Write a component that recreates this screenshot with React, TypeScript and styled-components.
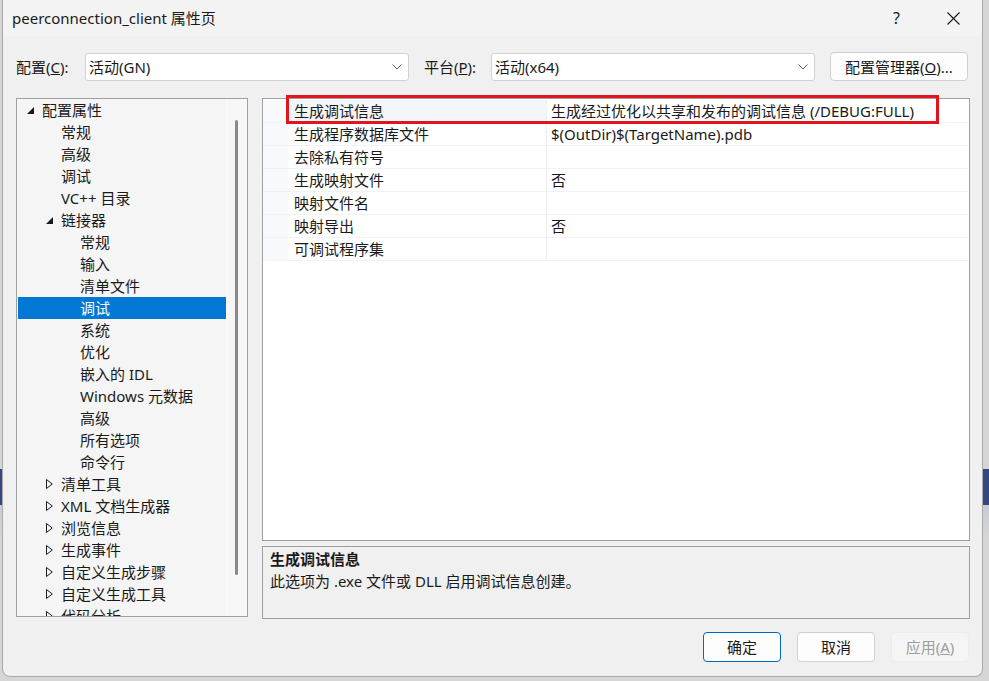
import React from "react";
import styled, { createGlobalStyle } from "styled-components";

const FONT = `"Noto Sans", "Noto Sans CJK SC", sans-serif`;

const GlobalStyle = createGlobalStyle`
  html, body { margin: 0; padding: 0; }
  body {
    width: 989px;
    height: 681px;
    overflow: hidden;
    font-family: ${FONT};
    background: linear-gradient(to bottom, #d6d6d6 0, #d6d6d6 469px, #34477f 469px, #34477f 505px, #c9ccd4 505px, #d6d6d6 540px);
  }
`;

const Window = styled.div`
  margin-left: 2px;
  width: 979px;
  height: 676px;
  background: #f0f0f0;
  border: 1px solid #a9a9a9;
  border-top: none;
  border-radius: 0 0 8px 8px;
  display: flex;
  flex-direction: column;
  color: #1a1a1a;
  font-size: 15px;
  overflow: hidden;
`;

const TitleBar = styled.div`
  height: 36px;
  background: #f3f3f3;
  display: flex;
  align-items: center;
  padding-left: 9px;
`;

const Title = styled.div`
  flex: 1;
  font-size: 15px;
  line-height: 20px;
  color: #1a1a1a;
`;

const CaptionButton = styled.div`
  width: 57px;
  height: 36px;
  display: flex;
  align-items: center;
  justify-content: center;
  font-size: 16px;
  color: #1a1a1a;
`;

const ConfigRow = styled.div`
  margin-top: 16px;
  height: 29px;
  display: flex;
  align-items: center;
  padding-left: 13px;
`;

const FieldLabel = styled.label<{ $w: number; $ml?: number }>`
  width: ${(p) => p.$w}px;
  margin-left: ${(p) => p.$ml ?? 0}px;
  line-height: 20px;
  white-space: nowrap;
`;

const Combo = styled.div`
  width: 324px;
  height: 28px;
  box-sizing: border-box;
  background: #ffffff;
  border: 1px solid #d2d2d2;
  border-radius: 3px;
  display: flex;
  align-items: center;
  padding: 0 6px 0 3px;
  line-height: 20px;
`;

const ComboText = styled.span`
  flex: 1;
`;

const PushButton = styled.div<{ $primary?: boolean; $disabled?: boolean }>`
  height: 30px;
  box-sizing: border-box;
  display: flex;
  align-items: center;
  justify-content: center;
  border-radius: 4px;
  border: 1px solid ${(p) => (p.$primary ? "#0067c0" : p.$disabled ? "#ececec" : "#d0d0d0")};
  background: ${(p) => (p.$disabled ? "#f5f5f5" : "#fdfdfd")};
  color: ${(p) => (p.$disabled ? "#9d9d9d" : "#1a1a1a")};
  line-height: 20px;
`;

const ManagerButton = styled(PushButton)`
  margin-left: 15px;
  width: 138px;
  height: 29px;
`;

const Main = styled.div`
  margin-top: 17px;
  display: flex;
  gap: 14px;
  padding-left: 13px;
`;

const TreePanel = styled.div`
  width: 232px;
  height: 519px;
  box-sizing: border-box;
  border: 1px solid #a0a0a0;
  background: #f5f5f5;
  display: flex;
  overflow: hidden;
`;

const TreeList = styled.div`
  width: 208px;
  padding-left: 1px;
  overflow: hidden;
`;

const TreeRow = styled.div<{ $level: number; $selected?: boolean }>`
  height: 22px;
  display: flex;
  align-items: center;
  padding-left: ${(p) => 8 + p.$level * 19}px;
  background: ${(p) => (p.$selected ? "#0078d4" : "transparent")};
  color: ${(p) => (p.$selected ? "#ffffff" : "#1a1a1a")};
  line-height: 20px;
  white-space: nowrap;
`;

const Expander = styled.span`
  width: 16px;
  height: 22px;
  display: flex;
  align-items: center;
  padding-left: 1px;
  box-sizing: border-box;
  flex: none;
`;

const ScrollTrack = styled.div`
  flex: 1;
  background: #f7f7f7;
  border-left: 1px solid #fbfbfb;
  padding-top: 21px;
  display: flex;
  justify-content: center;
`;

const ScrollThumb = styled.div`
  width: 3px;
  height: 455px;
  border-radius: 2px;
  background: #8a8a8a;
  margin-left: -2px;
`;

const RightColumn = styled.div`
  width: 708px;
  display: flex;
  flex-direction: column;
  gap: 5px;
`;

const Grid = styled.div`
  position: relative;
  height: 443px;
  box-sizing: border-box;
  border: 1px solid #a0a0a0;
  background: #ffffff;
  padding: 1px 1px 0 0;
`;

const GridRow = styled.div`
  height: 23px;
  box-sizing: border-box;
  display: flex;
  border-bottom: 1px solid #f0f2f5;
`;

const Gutter = styled.div`
  width: 25px;
  background: #f7f9fc;
  flex: none;
`;

const NameCell = styled.div<{ $active?: boolean }>`
  width: 259px;
  box-sizing: border-box;
  padding-left: 6px;
  background: ${(p) => (p.$active ? "#f2f5fa" : "#ffffff")};
  border-right: 1px solid #eef0f4;
  line-height: 23px;
  white-space: nowrap;
  flex: none;
`;

const ValueCell = styled.div`
  flex: 1;
  padding-left: 4px;
  line-height: 23px;
  white-space: nowrap;
`;

const Highlight = styled.div`
  position: absolute;
  left: 23px;
  top: -4px;
  width: 653px;
  height: 29px;
  box-sizing: border-box;
  border: 3px solid #e3141e;
  pointer-events: none;
`;

const Description = styled.div`
  height: 73px;
  box-sizing: border-box;
  border: 1px solid #a0a0a0;
  background: #f0f0f0;
  padding: 1px 7px;
  line-height: 22px;
`;

const DescTitle = styled.div`
  font-weight: 700;
`;

const Footer = styled.div`
  margin-top: 13px;
  display: flex;
  justify-content: flex-end;
  gap: 16px;
  padding-right: 13px;
`;

const DialogButton = styled(PushButton)`
  width: 78px;
`;

const Chevron = () => (
  <svg width="10" height="6" viewBox="0 0 10 6">
    <polyline points="0.5,0.5 5,5 9.5,0.5" fill="none" stroke="#606060" strokeWidth="1" />
  </svg>
);

const OpenArrow = () => (
  <svg width="7" height="7" viewBox="0 0 7 7">
    <polygon points="7,0 7,7 0,7" fill="#1a1a1a" />
  </svg>
);

const ClosedArrow = () => (
  <svg width="7" height="10" viewBox="0 0 7 10">
    <polygon points="0.5,0.5 6.3,5 0.5,9.5" fill="none" stroke="#1a1a1a" strokeWidth="1" />
  </svg>
);

const CloseIcon = () => (
  <svg width="13" height="13" viewBox="0 0 13 13">
    <path d="M0.5 0.5 L12.5 12.5 M12.5 0.5 L0.5 12.5" stroke="#1a1a1a" strokeWidth="1.1" />
  </svg>
);

type TreeItem = { label: string; level: number; arrow?: "open" | "closed"; selected?: boolean };

const tree: TreeItem[] = [
  { label: "配置属性", level: 0, arrow: "open" },
  { label: "常规", level: 1 },
  { label: "高级", level: 1 },
  { label: "调试", level: 1 },
  { label: "VC++ 目录", level: 1 },
  { label: "链接器", level: 1, arrow: "open" },
  { label: "常规", level: 2 },
  { label: "输入", level: 2 },
  { label: "清单文件", level: 2 },
  { label: "调试", level: 2, selected: true },
  { label: "系统", level: 2 },
  { label: "优化", level: 2 },
  { label: "嵌入的 IDL", level: 2 },
  { label: "Windows 元数据", level: 2 },
  { label: "高级", level: 2 },
  { label: "所有选项", level: 2 },
  { label: "命令行", level: 2 },
  { label: "清单工具", level: 1, arrow: "closed" },
  { label: "XML 文档生成器", level: 1, arrow: "closed" },
  { label: "浏览信息", level: 1, arrow: "closed" },
  { label: "生成事件", level: 1, arrow: "closed" },
  { label: "自定义生成步骤", level: 1, arrow: "closed" },
  { label: "自定义生成工具", level: 1, arrow: "closed" },
  { label: "代码分析", level: 1, arrow: "closed" },
];

const props: [string, string][] = [
  ["生成调试信息", "生成经过优化以共享和发布的调试信息 (/DEBUG:FULL)"],
  ["生成程序数据库文件", "$(OutDir)$(TargetName).pdb"],
  ["去除私有符号", ""],
  ["生成映射文件", "否"],
  ["映射文件名", ""],
  ["映射导出", "否"],
  ["可调试程序集", ""],
];

export default function App() {
  return (
    <>
      <GlobalStyle />
      <Window>
        <TitleBar>
          <Title>peerconnection_client 属性页</Title>
          <CaptionButton>?</CaptionButton>
          <CaptionButton>
            <CloseIcon />
          </CaptionButton>
        </TitleBar>

        <ConfigRow>
          <FieldLabel $w={69}>
            配置(<u>C</u>):
          </FieldLabel>
          <Combo>
            <ComboText>活动(GN)</ComboText>
            <Chevron />
          </Combo>
          <FieldLabel $w={67} $ml={15}>
            平台(<u>P</u>):
          </FieldLabel>
          <Combo>
            <ComboText>活动(x64)</ComboText>
            <Chevron />
          </Combo>
          <ManagerButton>
            配置管理器(<u>O</u>)...
          </ManagerButton>
        </ConfigRow>

        <Main>
          <TreePanel>
            <TreeList>
              {tree.map((t, i) => (
                <TreeRow key={i} $level={t.level} $selected={t.selected}>
                  <Expander>
                    {t.arrow === "open" && <OpenArrow />}
                    {t.arrow === "closed" && <ClosedArrow />}
                  </Expander>
                  {t.label}
                </TreeRow>
              ))}
            </TreeList>
            <ScrollTrack>
              <ScrollThumb />
            </ScrollTrack>
          </TreePanel>

          <RightColumn>
            <Grid>
              {props.map(([name, value], i) => (
                <GridRow key={i}>
                  <Gutter />
                  <NameCell $active={i === 0}>{name}</NameCell>
                  <ValueCell>{value}</ValueCell>
                </GridRow>
              ))}
              <Highlight />
            </Grid>
            <Description>
              <DescTitle>生成调试信息</DescTitle>
              <div>此选项为 .exe 文件或 DLL 启用调试信息创建。</div>
            </Description>
          </RightColumn>
        </Main>

        <Footer>
          <DialogButton $primary>确定</DialogButton>
          <DialogButton>取消</DialogButton>
          <DialogButton $disabled>
            应用(<u>A</u>)
          </DialogButton>
        </Footer>
      </Window>
    </>
  );
}
